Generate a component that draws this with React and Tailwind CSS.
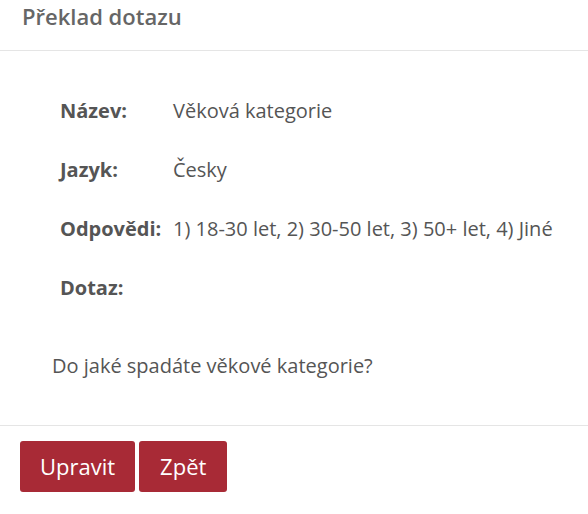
export default function App() {
    const rows = [
        { label: "Název:", value: "Věková kategorie" },
        { label: "Jazyk:", value: "Česky" },
        { label: "Odpovědi:", value: "1) 18-30 let, 2) 30-50 let, 3) 50+ let, 4) Jiné" },
        { label: "Dotaz:", value: "" },
    ];

    return (
        <div className="w-[588px] h-[514px] bg-white text-[#555] font-['Open_Sans',sans-serif]">
            <div className="h-[51px] border-b border-[#e5e5e5] px-[22px] pt-[2px]">
                <h2 className="text-[22px] font-semibold text-[#666] leading-[28px]">Překlad dotazu</h2>
            </div>
            <div className="pt-[30px] pb-[45px] border-b border-[#e5e5e5]">
                <div className="pl-[60px] grid grid-cols-[113px_1fr]">
                    {rows.map((row) => (
                        <div key={row.label} className="contents">
                            <div className="h-[59px] flex items-center font-bold text-[20px]">{row.label}</div>
                            <div className="h-[59px] flex items-center text-[20px]">{row.value}</div>
                        </div>
                    ))}
                </div>
                <p className="pl-[52px] pt-[35px] text-[20px] leading-[28px]">Do jaké spadáte věkové kategorie?</p>
            </div>
            <div className="px-[20px] pt-[15px] flex gap-[4px]">
                <button className="h-[51px] px-[20px] bg-[#a82a36] text-white text-[22px] rounded-[3px]">Upravit</button>
                <button className="h-[51px] px-[21px] bg-[#a82a36] text-white text-[22px] rounded-[3px]">Zpět</button>
            </div>
        </div>
    );
}
